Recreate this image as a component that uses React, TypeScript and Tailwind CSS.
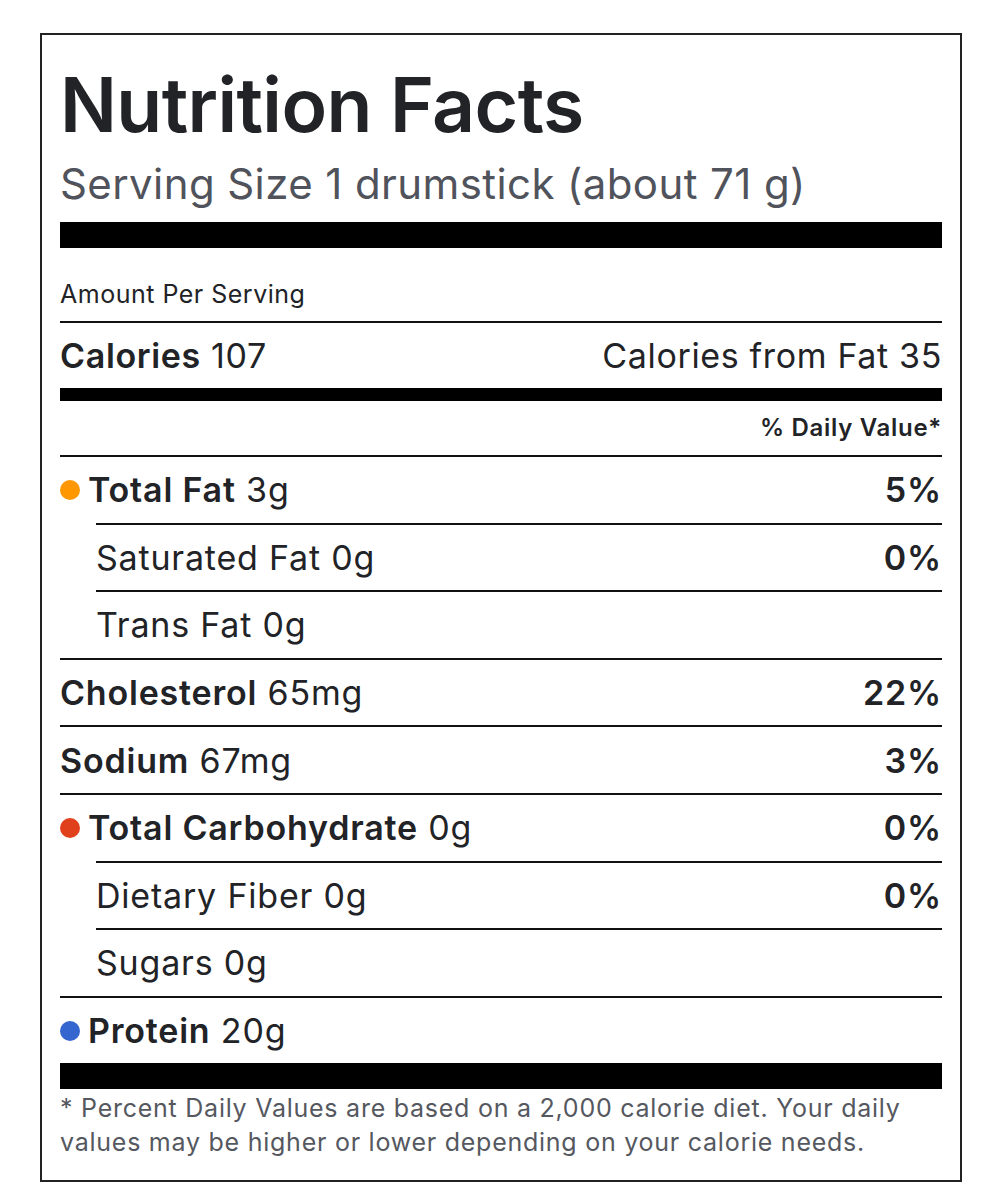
import React from "react";

interface Nutrient {
  label: string;
  amount: string;
  dv?: string;
  sub?: boolean;
  dot?: string;
}

const nutrients: Nutrient[] = [
  { label: "Total Fat", amount: "3g", dv: "5%", dot: "bg-[#ff9800]" },
  { label: "Saturated Fat", amount: "0g", dv: "0%", sub: true },
  { label: "Trans Fat", amount: "0g", sub: true },
  { label: "Cholesterol", amount: "65mg", dv: "22%" },
  { label: "Sodium", amount: "67mg", dv: "3%" },
  { label: "Total Carbohydrate", amount: "0g", dv: "0%", dot: "bg-[#e0401c]" },
  { label: "Dietary Fiber", amount: "0g", dv: "0%", sub: true },
  { label: "Sugars", amount: "0g", sub: true },
  { label: "Protein", amount: "20g", dot: "bg-[#3565cf]" },
];

function NutrientRow({ n }: { n: Nutrient }) {
  return (
    <div
      className={`h-[67.6px] border-t-2 border-[#111] flex items-center justify-between text-[34px] tracking-[0.8px] text-[#222327] ${
        n.sub ? "ml-[36px]" : ""
      }`}
    >
      <div className="flex items-center">
        {n.dot && <span className={`w-[20px] h-[20px] rounded-full mr-[8px] ${n.dot}`} />}
        {n.sub ? (
          <span>
            {n.label} {n.amount}
          </span>
        ) : (
          <span>
            <span className="font-semibold">{n.label}</span> {n.amount}
          </span>
        )}
      </div>
      {n.dv && <span className="font-semibold">{n.dv}</span>}
    </div>
  );
}

export default function App() {
  return (
    <div
      className="bg-white min-h-[1200px] pt-[33px] pl-[40px]"
      style={{ fontFamily: "Inter, 'Noto Sans', sans-serif" }}
    >
      <div className="w-[922px] border-2 border-[#222] px-[18px] pb-[21px]">
        {/* Header */}
        <h1 className="pt-[32px] text-[75px] leading-none font-semibold text-[#212327] tracking-[-0.6px]">
          Nutrition Facts
        </h1>
        <p className="mt-[21px] text-[42px] leading-none text-[#50535b] tracking-[0.4px]">
          Serving Size 1 drumstick (about 71 g)
        </p>
        <div className="mt-[17px] h-[26px] bg-black" />

        {/* Calories */}
        <div className="h-[73px] pt-[32px] text-[25px] leading-[28px] tracking-[0.5px] text-[#222327]">
          Amount Per Serving
        </div>
        <div className="h-[67px] border-t-2 border-[#111] flex items-center justify-between text-[34px] tracking-[0.65px] text-[#222327]">
          <span>
            <span className="font-semibold">Calories</span> 107
          </span>
          <span>Calories from Fat 35</span>
        </div>
        <div className="h-[13px] bg-black" />
        <div className="h-[54px] flex items-center justify-end text-[24px] font-semibold tracking-[0.7px] text-[#222327]">
          % Daily Value*
        </div>

        {/* Nutrients */}
        {nutrients.map((n) => (
          <NutrientRow key={n.label} n={n} />
        ))}
        <div className="h-[26px] bg-black" />

        {/* Footnote */}
        <p className="pt-[2px] text-[25px] leading-[34px] tracking-[0.75px] text-[#55585f]">
          * Percent Daily Values are based on a 2,000 calorie diet. Your daily
          <br />
          values may be higher or lower depending on your calorie needs.
        </p>
      </div>
    </div>
  );
}
